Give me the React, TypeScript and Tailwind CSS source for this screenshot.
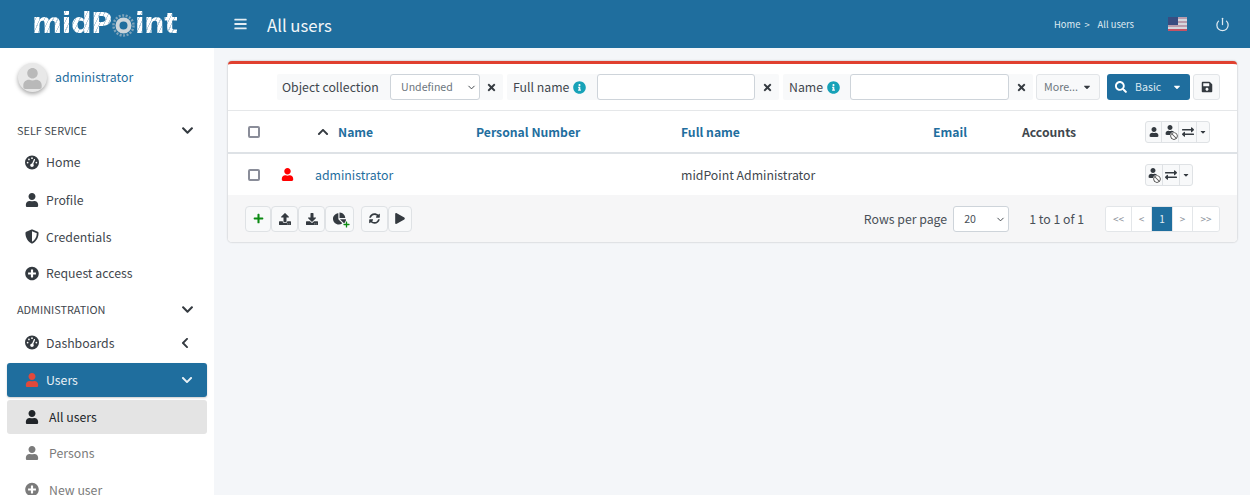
import React from 'react';
import {
  FaBars,
  FaBan,
  FaCaretDown,
  FaChartPie,
  FaChevronDown,
  FaChevronLeft,
  FaChevronUp,
  FaDownload,
  FaExchangeAlt,
  FaInfoCircle,
  FaPlay,
  FaPlus,
  FaPlusCircle,
  FaSave,
  FaSearch,
  FaShieldAlt,
  FaSyncAlt,
  FaTimes,
  FaUpload,
  FaUser,
} from 'react-icons/fa';
import { FaGaugeHigh } from 'react-icons/fa6';
import { ChevronDown, Power } from 'lucide-react';

const gridCols = 'grid grid-cols-[51px_197px_205px_252px_89px_123px_1fr] items-center';

const Logo = () => (
  <div className="flex items-center w-[214px] h-12 pl-[32px] pb-[1px]">
    <span className="flex items-center font-['DejaVu_Sans',sans-serif] font-bold text-[29px] leading-none tracking-[-0.6px]">
      <span className="text-transparent bg-clip-text bg-[repeating-linear-gradient(115deg,#ffffff_0px,#ffffff_3px,#b9d0df_3px,#b9d0df_4px)]">
        midP
      </span>
      <svg width="23" height="23" viewBox="0 0 23 23" className="mt-[3px] shrink-0">
        <circle cx="11.5" cy="11.5" r="10" fill="none" stroke="#7ea3ba" strokeWidth="2.5" strokeDasharray="2 1.5" />
        <circle cx="11.5" cy="11.5" r="6" fill="none" stroke="#ccd5da" strokeWidth="4" />
      </svg>
      <span className="text-transparent bg-clip-text bg-[repeating-linear-gradient(115deg,#ffffff_0px,#ffffff_3px,#b9d0df_3px,#b9d0df_4px)]">
        int
      </span>
    </span>
  </div>
);

const UsFlag = () => (
  <svg width="19" height="14" viewBox="0 0 19 14" className="opacity-90">
    <rect width="19" height="14" fill="#e8e3e6" />
    <rect y="0" width="19" height="2" fill="#c9a0ae" />
    <rect y="4" width="19" height="2" fill="#c9a0ae" />
    <rect y="8" width="19" height="2" fill="#c9a0ae" />
    <rect y="12" width="19" height="2" fill="#d8505e" />
    <rect width="10" height="8" fill="#3c4a7e" />
  </svg>
);

const Header = () => (
  <header className="flex items-center h-12 bg-[#1f6e9e] text-white shrink-0">
    <Logo />
    <button className="ml-5 text-[#e3edf3]">
      <FaBars className="w-[13px] h-[14px]" />
    </button>
    <h1 className="ml-5 mt-[2px] text-[16.7px] leading-none text-[#f2f6f9]">All users</h1>
    <div className="ml-auto flex items-center text-[9.4px] text-[#dfeaf1]">
      <span>Home</span>
      <span className="ml-1">&gt;</span>
      <span className="ml-[8px]">All users</span>
    </div>
    <div className="ml-[34px]">
      <UsFlag />
    </div>
    <button className="ml-[28px] mr-[20px] text-[#dfeaf1]">
      <Power className="w-[15px] h-[15px]" strokeWidth={2} />
    </button>
  </header>
);

const SectionTitle = ({ title }: { title: string }) => (
  <div className="flex items-center justify-between pl-[17px] pr-[20px] h-[20px] text-[10.9px] text-[#3f474e]">
    <span>{title}</span>
    <FaChevronDown className="w-[13px] h-[13px] text-[#343a40]" />
  </div>
);

interface MenuItemProps {
  icon: React.ReactNode;
  label: string;
  right?: React.ReactNode;
  className?: string;
  labelClass?: string;
}

const MenuItem = ({ icon, label, right, className = '', labelClass = 'ml-[7px]' }: MenuItemProps) => (
  <div className={`flex items-center mx-[7px] pl-[18px] pr-[14px] rounded-[3px] ${className}`}>
    <span className="w-[14px] flex justify-center shrink-0">{icon}</span>
    <span className={labelClass}>{label}</span>
    {right && <span className="ml-auto">{right}</span>}
  </div>
);

const Sidebar = () => (
  <aside className="w-[214px] bg-white shrink-0 overflow-hidden text-[12.3px] text-[#3f474e]">
    <div className="flex items-center h-[58px] pl-[18px]">
      <div className="w-[29px] h-[29px] rounded-full bg-[#e8e8e8] shadow-[0_2px_4px_rgba(0,0,0,0.35)] flex items-end justify-center overflow-hidden">
        <FaUser className="w-[21px] h-[21px] text-[#b9b9b9] mb-[3px]" />
      </div>
      <span className="ml-[8px] text-[#1f6e9e]">administrator</span>
    </div>
    <div className="mt-[14px]">
      <SectionTitle title="SELF SERVICE" />
    </div>
    <div className="mt-[3px] flex flex-col">
      <MenuItem className="h-[38px]" icon={<FaGaugeHigh className="w-[15px] h-[15px] text-[#343a40]" />} label="Home" />
      <MenuItem className="h-[37px]" icon={<FaUser className="w-[14px] h-[14px] text-[#343a40]" />} label="Profile" />
      <MenuItem className="h-[37px]" icon={<FaShieldAlt className="w-[14px] h-[15px] text-[#343a40]" />} label="Credentials" />
      <MenuItem className="h-[36px]" icon={<FaPlusCircle className="w-[15px] h-[15px] text-[#343a40]" />} label="Request access" />
    </div>
    <div className="mt-[8px]">
      <SectionTitle title="ADMINISTRATION" />
    </div>
    <div className="mt-[5px] flex flex-col">
      <MenuItem
        className="h-[37px]"
        icon={<FaGaugeHigh className="w-[15px] h-[15px] text-[#343a40]" />}
        label="Dashboards"
        right={<FaChevronLeft className="w-[12px] h-[12px] mr-[2px] text-[#343a40]" />}
      />
      <MenuItem
        className="h-[34px] mt-[2px] bg-[#1f6e9e] text-[#e9f1f6] shadow-[0_1px_2px_rgba(0,0,0,0.2)]"
        icon={<FaUser className="w-[14px] h-[14px] text-[#e0493b]" />}
        label="Users"
        right={<FaChevronDown className="w-[12px] h-[12px]" />}
      />
      <MenuItem
        className="h-[34px] mt-[3px] bg-[#e4e4e4] text-[#212529]"
        labelClass="ml-[10px]"
        icon={<FaUser className="w-[14px] h-[14px]" />}
        label="All users"
      />
      <MenuItem
        className="h-[37px] text-[#7b7b7b]"
        labelClass="ml-[10px]"
        icon={<FaUser className="w-[14px] h-[14px]" />}
        label="Persons"
      />
      <MenuItem
        className="h-[37px] text-[#7b7b7b]"
        labelClass="ml-[10px]"
        icon={<FaPlusCircle className="w-[15px] h-[15px]" />}
        label="New user"
      />
    </div>
  </aside>
);

const Info = () => <FaInfoCircle className="w-[13px] h-[13px] text-[#17a2b8] ml-[4px]" />;

const ClearButton = ({ className = '' }: { className?: string }) => (
  <span className={`flex items-center justify-center text-[#343a40] ${className}`}>
    <FaTimes className="w-[11px] h-[11px]" />
  </span>
);

const SelectBox = ({ value, width, color }: { value: string; width: string; color: string }) => (
  <span className={`relative block h-[26px] ${width}`}>
    <select className={`appearance-none w-full h-[26px] pl-[10px] bg-white border border-[#ced4da] rounded-[3px] text-[10.6px] ${color}`}>
      <option>{value}</option>
    </select>
    <ChevronDown className="absolute right-[3px] top-[8px] w-[11px] h-[11px] text-[#343a40] pointer-events-none" strokeWidth={2} />
  </span>
);

const TextFilter = ({ label, labelWidth, inputWidth }: { label: string; labelWidth: string; inputWidth: string }) => (
  <div className="flex items-center h-[26px] bg-[#f8f9fa] rounded-[2px] text-[12.3px] text-[#3f474e]">
    <span className={`flex items-center pl-[6px] ${labelWidth}`}>
      {label}
      <Info />
    </span>
    <input className={`h-[26px] ${inputWidth} bg-white border border-[#ced4da] rounded-[3px]`} />
    <ClearButton className="w-[24px]" />
  </div>
);

const Toolbar = () => (
  <div className="flex items-center h-[47px] pl-[49px] border-b border-[#e5e7e9]">
    <div className="flex items-center h-[26px] bg-[#f8f9fa] rounded-[2px] text-[12.3px] text-[#3f474e]">
      <span className="pl-[5px] w-[113px]">Object collection</span>
      <SelectBox value="Undefined" width="w-[90px]" color="text-[#6c757d]" />
      <ClearButton className="w-[23px]" />
    </div>
    <div className="ml-[4px]">
      <TextFilter label="Full name" labelWidth="w-[90px]" inputWidth="w-[158px]" />
    </div>
    <div className="ml-[4px]">
      <TextFilter label="Name" labelWidth="w-[67px]" inputWidth="w-[159px]" />
    </div>
    <button className="ml-[3px] flex items-center justify-between h-[26px] w-[64px] px-[7px] bg-[#f8f9fa] border border-[#e2e5e8] rounded-[3px] text-[10.7px] text-[#6c757d]">
      More...
      <FaCaretDown className="w-[10px] h-[10px] text-[#343a40]" />
    </button>
    <button className="ml-[7px] flex items-center h-[26px] w-[83px] pl-[8px] pr-[8px] bg-[#1f6e9e] rounded-[3px] text-[10.6px] text-[#dbe8f0]">
      <FaSearch className="w-[12px] h-[12px] text-white" />
      <span className="ml-[8px]">Basic</span>
      <FaCaretDown className="ml-auto w-[10px] h-[10px] text-white" />
    </button>
    <button className="ml-[3px] flex items-center justify-center h-[26px] w-[27px] bg-[#f8f9fa] border border-[#e2e5e8] rounded-[3px]">
      <FaSave className="w-[12px] h-[12px] text-[#343a40]" />
    </button>
  </div>
);

const Checkbox = () => (
  <span className="block ml-[20px] w-[12px] h-[12px] bg-white border-2 border-[#8a8d99] rounded-[2px]" />
);

const UserBan = () => (
  <span className="relative block w-[13px] h-[14px]">
    <FaUser className="w-[10px] h-[10px] ml-[1px] text-[#343a40]" />
    <FaBan className="absolute right-[-1px] bottom-[-1px] w-[8px] h-[8px] text-[#555] bg-white rounded-full" />
  </span>
);

const SmallGroupCell = ({ children, className = '' }: { children: React.ReactNode; className?: string }) => (
  <span className={`flex items-center justify-center h-[20px] border-r border-[#dfe2e5] last:border-r-0 ${className}`}>
    {children}
  </span>
);

const HeaderRow = () => (
  <div className={`${gridCols} h-[43px] border-b-2 border-[#dee2e6] text-[12.2px] font-bold text-[#1f6e9e]`}>
    <Checkbox />
    <span className="flex items-center pl-[37px]">
      <FaChevronUp className="w-[14px] h-[12px] text-[#343a40] mr-[8px]" />
      Name
    </span>
    <span>Personal Number</span>
    <span>Full name</span>
    <span>Email</span>
    <span className="text-[#3f474e]">Accounts</span>
    <span className="flex w-[65px] bg-[#f8f9fa] border border-[#dfe2e5] rounded-[3px]">
      <SmallGroupCell className="w-[16px]">
        <FaUser className="w-[10px] h-[10px] text-[#343a40]" />
      </SmallGroupCell>
      <SmallGroupCell className="w-[17px]">
        <UserBan />
      </SmallGroupCell>
      <SmallGroupCell className="w-[18px]">
        <FaExchangeAlt className="w-[12px] h-[12px] text-[#343a40]" />
      </SmallGroupCell>
      <SmallGroupCell className="w-[12px]">
        <FaCaretDown className="w-[8px] h-[8px] text-[#343a40]" />
      </SmallGroupCell>
    </span>
  </div>
);

const DataRow = () => (
  <div className={`${gridCols} h-[41px] text-[12.3px] text-[#3f474e]`}>
    <Checkbox />
    <span className="flex items-center pl-[2px] text-[#1f6e9e]">
      <FaUser className="w-[13px] h-[13px] text-[#ff0000] mr-[21px]" />
      administrator
    </span>
    <span />
    <span>midPoint Administrator</span>
    <span />
    <span />
    <span className="flex w-[48px] bg-[#f8f9fa] border border-[#dfe2e5] rounded-[3px]">
      <SmallGroupCell className="w-[17px]">
        <UserBan />
      </SmallGroupCell>
      <SmallGroupCell className="w-[18px]">
        <FaExchangeAlt className="w-[12px] h-[12px] text-[#343a40]" />
      </SmallGroupCell>
      <SmallGroupCell className="w-[12px]">
        <FaCaretDown className="w-[8px] h-[8px] text-[#343a40]" />
      </SmallGroupCell>
    </span>
  </div>
);

const ToolButton = ({ children, className = '' }: { children: React.ReactNode; className?: string }) => (
  <button className={`relative flex items-center justify-center h-[26px] bg-[#f8f9fa] border border-[#dfe2e5] rounded-[4px] text-[#343a40] ${className}`}>
    {children}
  </button>
);

const PageButton = ({ label, active, className = '' }: { label: string; active?: boolean; className?: string }) => (
  <span
    className={`flex items-center justify-center h-[26px] text-[10px] border-r border-[#e3e6e9] last:border-r-0 ${
      active ? 'bg-[#1f6e9e] text-[#e3edf3]' : 'bg-white text-[#8a9099]'
    } ${className}`}
  >
    {label}
  </span>
);

const Footer = () => (
  <div className="flex items-center h-[47px] pl-[17px] pr-[17px] bg-[#f6f6f7] rounded-b-[4px]">
    <ToolButton className="w-[26px]">
      <FaPlus className="w-[11px] h-[11px] text-[#0b8a12]" />
    </ToolButton>
    <ToolButton className="w-[27px]">
      <FaUpload className="w-[12px] h-[12px]" />
    </ToolButton>
    <ToolButton className="w-[27px]">
      <FaDownload className="w-[12px] h-[12px]" />
    </ToolButton>
    <ToolButton className="w-[29px]">
      <FaChartPie className="w-[13px] h-[13px]" />
      <FaPlus className="absolute right-[3px] bottom-[3px] w-[7px] h-[7px] text-[#0b8a12]" />
    </ToolButton>
    <ToolButton className="w-[27px] ml-[7px]">
      <FaSyncAlt className="w-[11px] h-[11px]" />
    </ToolButton>
    <ToolButton className="w-[24px]">
      <FaPlay className="w-[10px] h-[11px]" />
    </ToolButton>
    <span className="ml-auto text-[12.3px] text-[#495057]">Rows per page</span>
    <span className="ml-[6px]">
      <SelectBox value="20" width="w-[56px]" color="text-[#495057]" />
    </span>
    <span className="ml-[20px] text-[12.3px] text-[#495057]">1 to 1 of 1</span>
    <div className="ml-[21px] flex border border-[#e3e6e9] rounded-[3px] overflow-hidden h-[26px] items-center">
      <PageButton label="<<" className="w-[26px]" />
      <PageButton label="<" className="w-[20px]" />
      <PageButton label="1" active className="w-[21px]" />
      <PageButton label=">" className="w-[20px]" />
      <PageButton label=">>" className="w-[26px]" />
    </div>
  </div>
);

export default function App() {
  return (
    <div className="h-screen flex flex-col overflow-hidden font-['Noto_Sans_CJK_SC','Noto_Sans',sans-serif] leading-[20px]">
      <Header />
      <div className="flex flex-1 min-h-0">
        <Sidebar />
        <main className="flex-1 bg-[#f4f6f9] pt-[13px] pl-[14px] pr-[13px]">
          <div className="bg-white border-t-[3px] border-[#e0402f] rounded-[4px] shadow-[0_0_2px_rgba(0,0,0,0.3)]">
            <Toolbar />
            <HeaderRow />
            <DataRow />
            <Footer />
          </div>
        </main>
      </div>
    </div>
  );
}
